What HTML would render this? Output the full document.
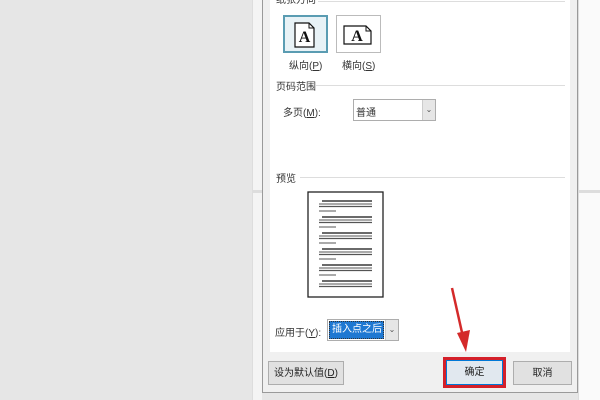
<!DOCTYPE html><html><head><meta charset="utf-8"><style>
*{margin:0;padding:0;box-sizing:border-box}
body{width:600px;height:400px;overflow:hidden;background:#e6e6e6;position:relative;font-family:"Liberation Sans","Noto Sans CJK SC",sans-serif;font-size:10px;color:#222}
.a{position:absolute}
.lbl{position:absolute;font-size:10px;color:#333;white-space:nowrap}
.btn{position:absolute;background:#e1e1e1;border:1px solid #adadad;font-size:10px;text-align:center;color:#222;line-height:23px}
</style></head><body>
<div class="a" style="left:252px;top:0;width:10px;height:400px;background:#f4f4f4;border-left:1px solid #ddd"></div>
<div class="a" style="left:252px;top:190px;width:10px;height:3px;background:#ddd"></div>
<div class="a" style="left:578px;top:0;width:22px;height:400px;background:#fafafa;border-left:1px solid #ddd"></div>
<div class="a" style="left:578px;top:190px;width:22px;height:3px;background:#ddd"></div>
<div class="a" style="left:262px;top:-2px;width:316px;height:395px;background:#f0f0f0;border:1px solid #9a9a9a"></div>
<div class="a" style="left:270px;top:0;width:300px;height:352px;background:#fff"></div>
<div class="lbl" style="left:276px;top:-9px">纸张方向</div>
<div class="a" style="left:318px;top:1px;width:247px;height:1px;background:#ddd"></div>
<div class="a" style="left:283px;top:15px;width:45px;height:38px;border:2px solid #5a9cb2;background:#e8f2f6"></div>
<svg class="a" style="left:294px;top:22px" width="22" height="26"><path d="M1 1H15L20 6V25H1Z" fill="#fff" stroke="#111" stroke-width="1.2"/><path d="M15 1V6H20" fill="none" stroke="#111"/><text x="10.5" y="20" font-family="Liberation Serif" font-weight="bold" font-size="16" text-anchor="middle" fill="#111">A</text></svg>
<div class="a" style="left:336px;top:15px;width:45px;height:38px;border:1px solid #bbb;background:#fff"></div>
<svg class="a" style="left:343px;top:25px" width="30" height="20"><path d="M1 1H23L28 6V19H1Z" fill="#fff" stroke="#111" stroke-width="1.2"/><path d="M23 1V6H28" fill="none" stroke="#111"/><text x="14" y="16" font-family="Liberation Serif" font-weight="bold" font-size="16" text-anchor="middle" fill="#111">A</text></svg>
<div class="lbl" style="left:289px;top:57px">纵向(<u>P</u>)</div>
<div class="lbl" style="left:342px;top:57px">横向(<u>S</u>)</div>
<div class="lbl" style="left:276px;top:78px">页码范围</div>
<div class="a" style="left:316px;top:85px;width:249px;height:1px;background:#ddd"></div>
<div class="lbl" style="left:283px;top:104px">多页(<u>M</u>):</div>
<div class="a" style="left:353px;top:99px;width:83px;height:22px;border:1px solid #adadad;background:#fff"></div>
<div class="lbl" style="left:356px;top:104px">普通</div>
<div class="a" style="left:422px;top:100px;width:13px;height:20px;background:#e6e6e6;border-left:1px solid #ccc;font-size:8px;color:#555;text-align:center;line-height:20px">&#8964;</div>
<div class="lbl" style="left:276px;top:170px">预览</div>
<div class="a" style="left:300px;top:177px;width:265px;height:1px;background:#ddd"></div>
<svg class="a" style="left:307px;top:191px" width="78" height="108">
<rect x="1" y="1" width="75" height="105" fill="#fff" stroke="#222" stroke-width="1.3"/>
<g stroke-width="1.2">
<g id="g"><line x1="15" y1="10" x2="65" y2="10" stroke="#111"/><line x1="12" y1="13" x2="65" y2="13" stroke="#777"/><line x1="12" y1="15.5" x2="65" y2="15.5" stroke="#555"/><line x1="12" y1="20" x2="29" y2="20" stroke="#777"/></g>
<use href="#g" y="16"/><use href="#g" y="32"/><use href="#g" y="48"/><use href="#g" y="64"/>
<line x1="15" y1="90" x2="65" y2="90" stroke="#111"/><line x1="12" y1="93" x2="65" y2="93" stroke="#777"/><line x1="12" y1="95.5" x2="65" y2="95.5" stroke="#555"/>
</g></svg>
<div class="lbl" style="left:275px;top:324px">应用于(<u>Y</u>):</div>
<div class="a" style="left:327px;top:319px;width:72px;height:22px;border:1px solid #adadad;background:#fff"></div>
<div class="a" style="left:329px;top:321px;width:55px;height:18px;background:#1e78d2;border:1px dotted #333;color:#fff;font-size:10px;line-height:16px;padding-left:2px">插入点之后</div>
<div class="a" style="left:385px;top:320px;width:13px;height:20px;background:#e6e6e6;border-left:1px solid #ccc;font-size:8px;color:#555;text-align:center;line-height:20px">&#8964;</div>
<div class="btn" style="left:268px;top:361px;width:76px;height:24px">设为默认值(<u>D</u>)</div>
<div class="a" style="left:443px;top:357px;width:63px;height:31px;border:3px solid #d4202a"></div>
<div class="btn" style="left:446px;top:360px;width:57px;height:25px;border:1px solid #0078d7;background:#e1e8ef;line-height:24px">确定</div>
<div class="btn" style="left:513px;top:361px;width:59px;height:24px">取消</div>
<svg class="a" style="left:440px;top:282px" width="40" height="75"><line x1="12" y1="6" x2="23" y2="55" stroke="#d42a2a" stroke-width="2.5"/><path d="M17 51L30 48L26 70Z" fill="#d42a2a"/></svg>
</body></html>
